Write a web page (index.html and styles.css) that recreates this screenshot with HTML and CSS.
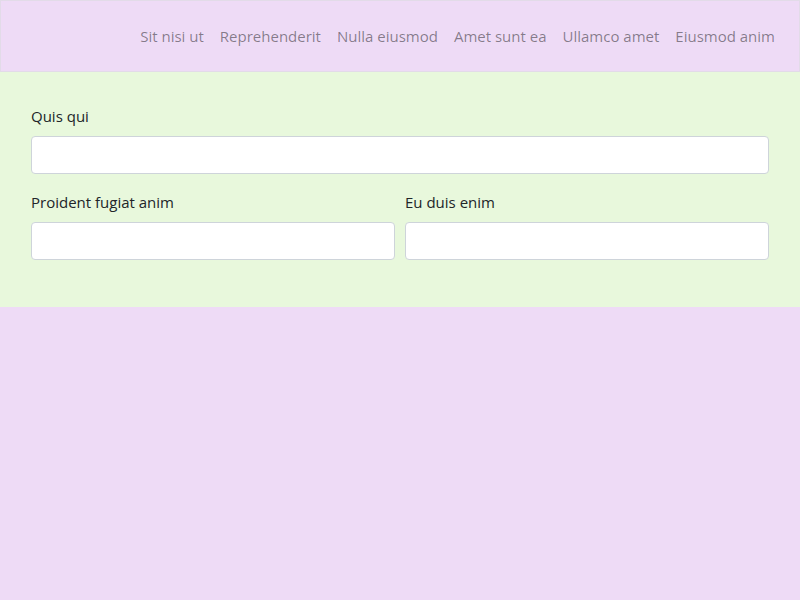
FILE: index.html
```html
<!DOCTYPE html>
<html>
<head>
<meta charset="utf-8">
<link rel="stylesheet" href="styles.css">
</head>
<body>
<header class="topbar">
  <nav class="nav">
    <a class="nav-link" href="#">Sit nisi ut</a>
    <a class="nav-link" href="#">Reprehenderit</a>
    <a class="nav-link" href="#">Nulla eiusmod</a>
    <a class="nav-link" href="#">Amet sunt ea</a>
    <a class="nav-link" href="#">Ullamco amet</a>
    <a class="nav-link" href="#">Eiusmod anim</a>
  </nav>
</header>
<section class="form-area">
  <div class="field">
    <label class="label">Quis qui</label>
    <input class="input" type="text">
  </div>
  <div class="row">
    <div class="field">
      <label class="label">Proident fugiat anim</label>
      <input class="input" type="text">
    </div>
    <div class="field">
      <label class="label">Eu duis enim</label>
      <input class="input" type="text">
    </div>
  </div>
</section>
</body>
</html>
```
FILE: styles.css
```css
* { box-sizing: border-box; }
html, body { margin: 0; padding: 0; }
body {
  background: #eedbf6;
  font-family: "Open Sans", "Noto Sans", sans-serif;
  font-size: 15px;
  color: #212529;
  min-height: 600px;
}
.topbar {
  height: 72px;
  border: 1px solid #e2dbe8;
  background: #eedbf6;
  display: flex;
  align-items: center;
  justify-content: flex-end;
  padding: 0 16px 0 0;
}
.nav { display: flex; }
.nav-link {
  padding: 0 8px;
  color: rgba(0, 0, 0, 0.45);
  text-decoration: none;
  font-size: 15px;
  line-height: 24px;
}
.form-area {
  background: #e8f8dc;
  padding: 32px 31px 31px;
}
.field { display: flex; flex-direction: column; margin-bottom: 16px; flex: 1; }
.label { line-height: 24px; margin-bottom: 8px; font-size: 15px; }
.input {
  height: 38px;
  border: 1px solid #ced4da;
  border-radius: 4px;
  background: #fff;
  width: 100%;
}
.row { display: flex; gap: 10px; }
```
